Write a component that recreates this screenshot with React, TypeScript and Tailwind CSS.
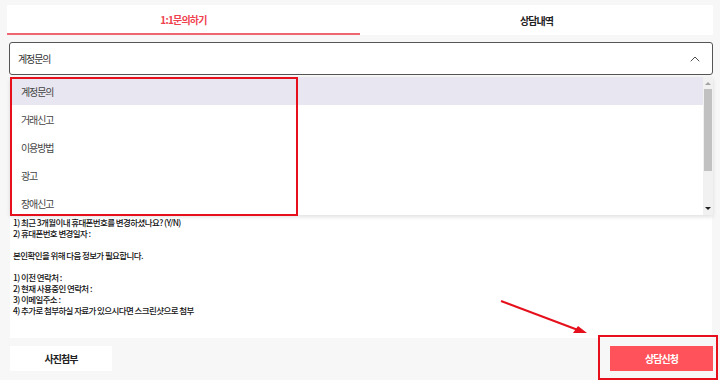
import { ChevronUp } from "lucide-react";

const options = ["계정문의", "거래신고", "이용방법", "광고", "장애신고"];

const bodyLines = [
  "1) 최근 3개월이내 휴대폰번호를 변경하셨나요? (Y/N)",
  "2) 휴대폰번호 변경일자 :",
  "",
  "본인확인을 위해 다음 정보가 필요합니다.",
  "",
  "1) 이전 연락처 :",
  "2) 현재 사용중인 연락처 :",
  "3) 이메일주소 :",
  "4) 추가로 첨부하실 자료가 있으시다면 스크린샷으로 첨부",
];

export default function App() {
  return (
    <div
      className="relative w-[720px] h-[380px] overflow-hidden bg-[#f7f7f7] text-[#222]"
      style={{ fontFamily: '"Noto Sans CJK KR", "Noto Sans", sans-serif' }}
    >
      {/* tabs */}
      <div className="mx-[7px] mt-[5px] flex h-[30px] bg-white">
        <div className="flex flex-1 items-center justify-center border-b-2 border-[#ee6670] text-[10px] font-bold tracking-[-0.8px] text-[#f0414e]">
          1:1문의하기
        </div>
        <div className="flex flex-1 items-center justify-center text-[10px] font-bold tracking-[-1px] text-[#222]">
          상담내역
        </div>
      </div>

      {/* select */}
      <div className="ml-[9px] mr-[7px] mt-[7px] flex h-[33px] items-center justify-between rounded-[3px] border border-[#555] bg-white pl-[8px] pr-[9px] text-[10px] tracking-[-1.1px] text-[#333]">
        <span>계정문의</span>
        <ChevronUp size={16} strokeWidth={1.3} className="text-[#333]" />
      </div>

      {/* textarea */}
      <div className="ml-[10px] mr-[8px] mt-[2px] h-[261px] bg-white px-[3px] pt-[140px] text-[8.5px] font-medium leading-[11px] tracking-[-0.6px] text-[#111]">
        {bodyLines.map((l, i) => (
          <div key={i} className="h-[11px] whitespace-nowrap">
            {l}
          </div>
        ))}
      </div>

      {/* buttons */}
      <div className="ml-[10px] mr-[7px] mt-[8px] flex h-[25px] justify-between">
        <button className="w-[102px] bg-white text-[10px] font-bold tracking-[-1px] text-[#222]">사진첨부</button>
        <button className="w-[103px] bg-[#ff525a] text-[10px] font-bold tracking-[-1px] text-white">상담신청</button>
      </div>

      {/* dropdown list */}
      <div className="absolute left-[10px] top-[77px] flex h-[138px] w-[703px] bg-white shadow-[0_2px_4px_rgba(0,0,0,0.12)]">
        <div className="flex-1">
          {options.map((o, i) => (
            <div
              key={o}
              className={`flex h-[28px] items-center pl-[11px] text-[10px] tracking-[-1.1px] text-[#444] ${
                i === 0 ? "bg-[#e8e7f1] text-[#222]" : ""
              }`}
            >
              {o}
            </div>
          ))}
        </div>
        <div className="flex w-[10px] flex-col items-center bg-[#f1f1f1]">
          <div className="mt-[5px] h-0 w-0 border-x-[3px] border-b-[3px] border-x-transparent border-b-[#a3a3a3]" />
          <div className="mt-[4px] h-[82px] w-[8px] bg-[#c1c1c1]" />
          <div className="flex-1" />
          <div className="mb-[5px] h-0 w-0 border-x-[3px] border-t-[3px] border-x-transparent border-t-[#222]" />
        </div>
      </div>

      {/* annotation boxes */}
      <div className="absolute left-[10px] top-[77px] h-[139px] w-[288px] border-2 border-[#e5101b]" />
      <div className="absolute left-[598px] top-[335px] h-[45px] w-[120px] border-2 border-[#e5101b]" />

      {/* annotation arrow */}
      <svg className="absolute left-0 top-0" width="720" height="380">
        <line x1="501" y1="301" x2="578" y2="330" stroke="#e5101b" strokeWidth="2" />
        <polygon points="587,333 573,333 578,326" fill="#e5101b" />
      </svg>
    </div>
  );
}
